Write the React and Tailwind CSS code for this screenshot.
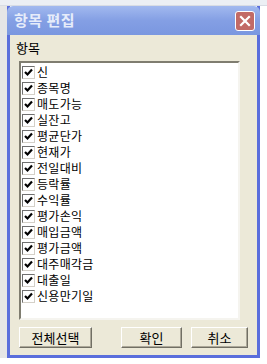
const items = [
  "신",
  "종목명",
  "매도가능",
  "실잔고",
  "평균단가",
  "현재가",
  "전일대비",
  "등락률",
  "수익률",
  "평가손익",
  "매입금액",
  "평가금액",
  "대주매각금",
  "대출일",
  "신용만기일",
];

const font = { fontFamily: '"Noto Sans CJK KR", "Noto Sans", sans-serif' };

function CheckBox() {
  return (
    <div className="w-[13px] h-[13px] bg-white border border-t-[#6f6f6f] border-l-[#6f6f6f] border-r-[#d4d0c8] border-b-[#d4d0c8] flex items-center justify-center shrink-0">
      <svg width="9" height="9" viewBox="0 0 9 9">
        <path d="M1 4 L3.5 6.5 L8 1.5" stroke="#000" strokeWidth="2.2" fill="none" />
      </svg>
    </div>
  );
}

function Btn({ label, width, className = "" }) {
  return (
    <button
      className={`h-[21px] bg-[#ece9d8] border border-t-white border-l-white border-r-[#716f64] border-b-[#716f64] shadow-[inset_-1px_-1px_0_#aca899] text-[13px] text-black leading-none ${width} ${className}`}
      style={font}
    >
      {label}
    </button>
  );
}

export default function App() {
  return (
    <div className="w-[267px] h-[364px] bg-white overflow-hidden" style={font}>
      <div className="h-[6px] bg-[#eceff4] border-b border-[#d8dce4]" />
      <div className="flex">
        <div className="w-[7px] h-[352px] bg-[#e6e6e6]" />
        <div className="w-[253px] h-[352px] flex flex-col border-x-[3px] border-b-[3px] border-[#5a6edc]">
          <div className="h-[29px] -mx-[3px] pl-[7px] pr-[6px] flex items-center justify-between bg-gradient-to-b from-[#a2b9ef] via-[#849fe4] to-[#7a97e0] rounded-t-[6px]">
            <span className="text-[15px] font-bold text-[#e6ecfa] tracking-[0.5px]">항목 편집</span>
            <div className="w-[20px] h-[20px] mr-[-1px] rounded-[3px] border border-white bg-[#c26a66] flex items-center justify-center">
              <svg width="12" height="12" viewBox="0 0 12 12">
                <path d="M2 2 L10 10 M10 2 L2 10" stroke="#fff" strokeWidth="2.2" strokeLinecap="square" />
              </svg>
            </div>
          </div>
          <div className="flex-1 bg-[#ece9d8] flex flex-col">
            <div className="pl-[6px] pt-[6px] h-[26px] text-[13px] leading-[14px] text-black">항목</div>
            <div className="ml-[9px] w-[221px] h-[259px] bg-white border-2 border-t-[#7f7d70] border-l-[#7f7d70] border-r-[#f5f4ef] border-b-[#f5f4ef] flex flex-col pt-[1px]">
              {items.map((it) => (
                <div key={it} className="h-[16px] flex items-center gap-[2px] pl-[1px]">
                  <CheckBox />
                  <span className="text-[12px] leading-none tracking-[0.3px] text-black">{it}</span>
                </div>
              ))}
            </div>
            <div className="flex mt-[7px] ml-[9px]">
              <Btn label="전체선택" width="w-[73px]" />
              <Btn label="확인" width="w-[61px]" className="ml-[29px]" />
              <Btn label="취소" width="w-[57px]" className="ml-[9px]" />
            </div>
          </div>
        </div>
        <div className="flex-1 bg-white" />
      </div>
    </div>
  );
}
